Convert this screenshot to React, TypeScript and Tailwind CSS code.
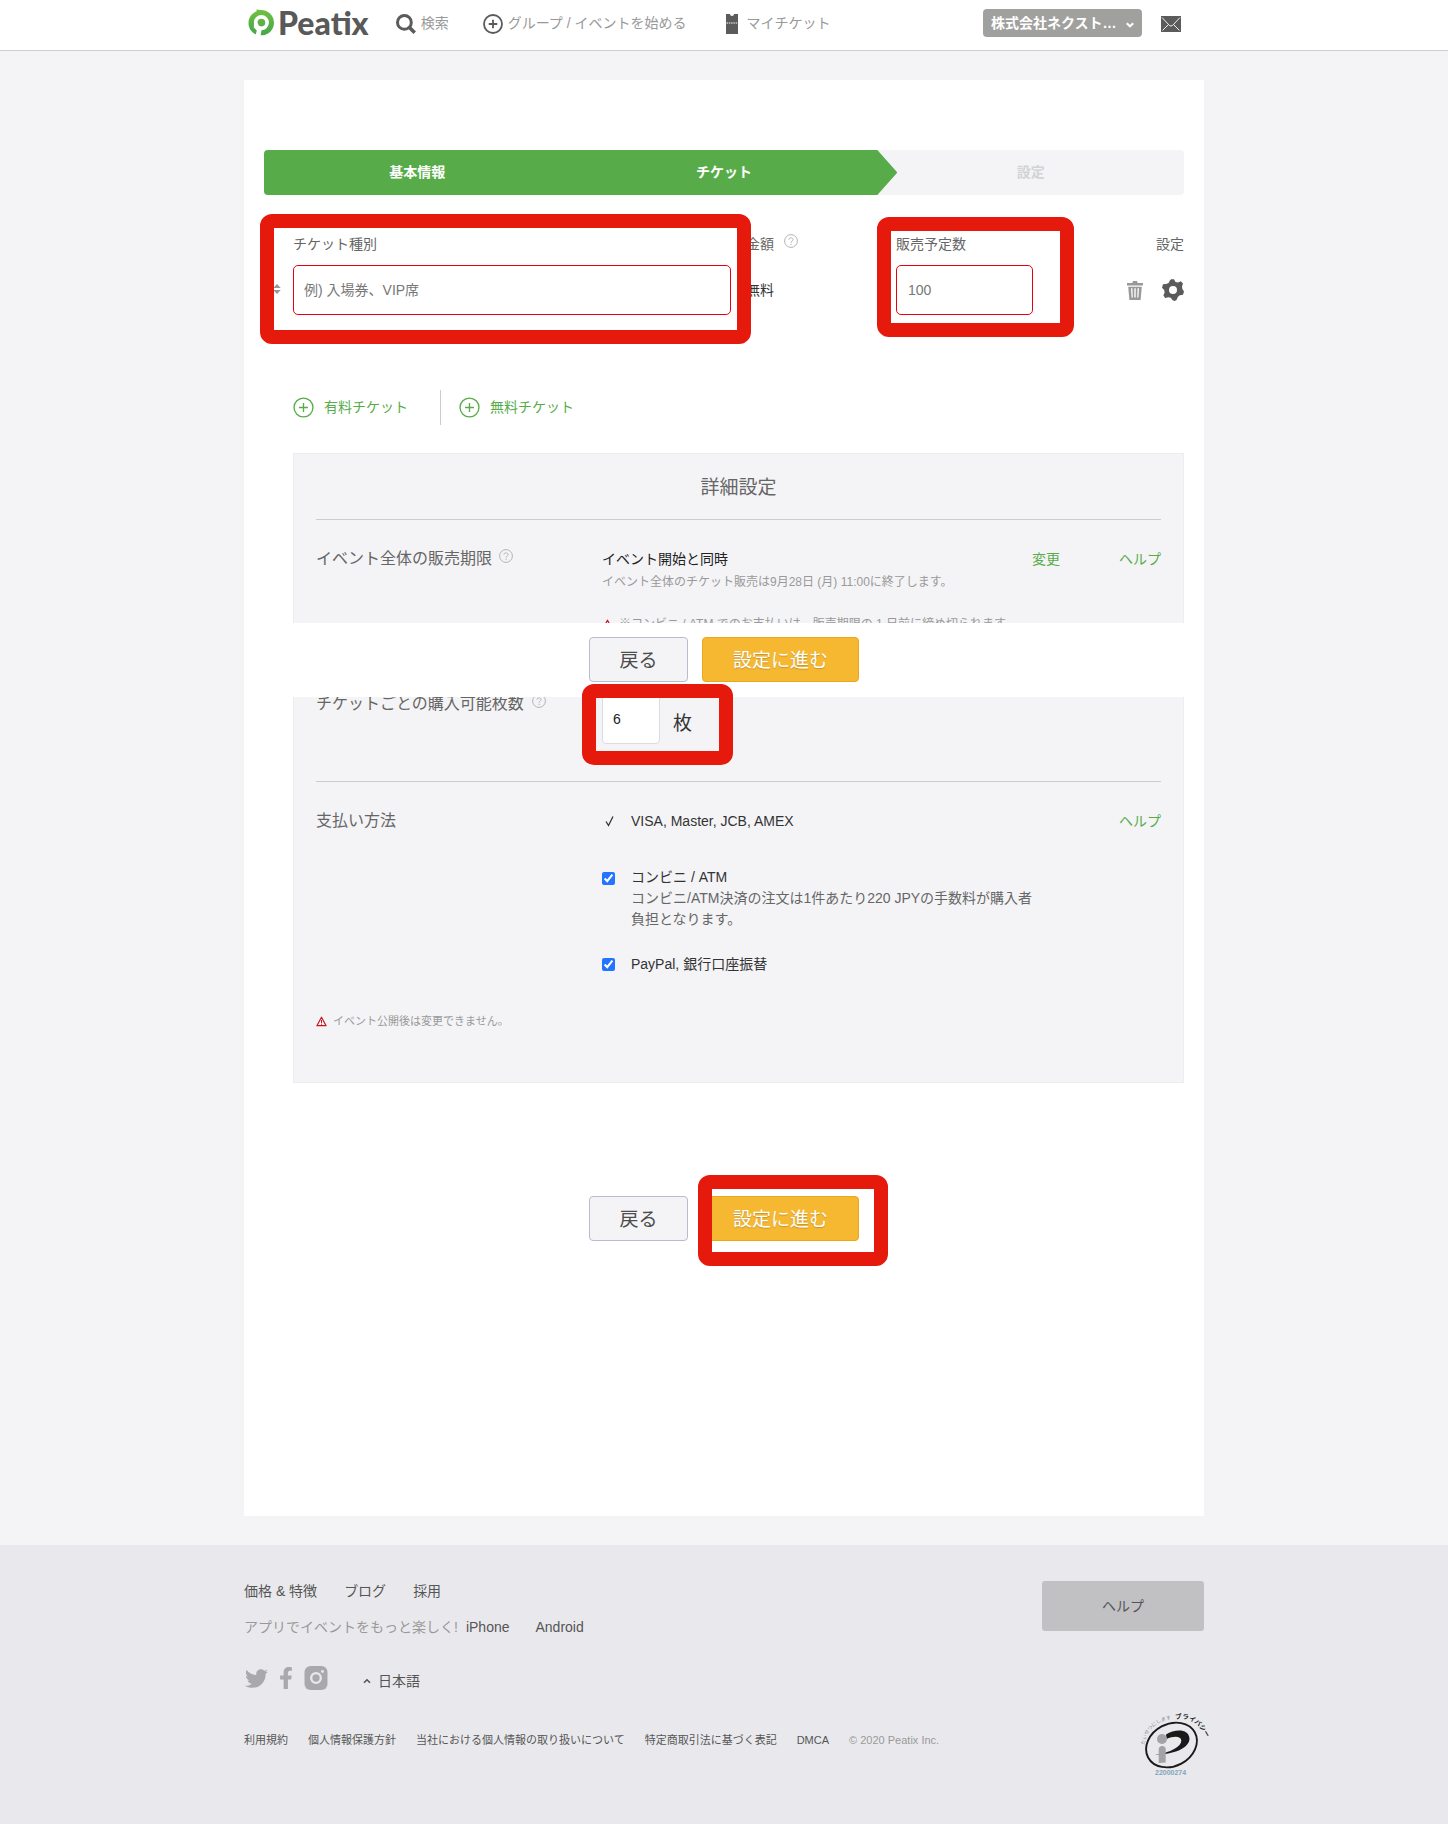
import React from "react";
import { FaTwitter, FaFacebookF } from "react-icons/fa";

const font = "font-['Liberation_Sans','Noto_Sans_CJK_JP',sans-serif]";

function PeatixMark() {
  return (
    <svg width="27" height="27" viewBox="0 0 27 27" aria-hidden="true">
      <defs>
        <linearGradient id="markFill" x1="0" y1="0" x2="0" y2="1">
          <stop offset="0" stopColor="#72c043" />
          <stop offset="1" stopColor="#45a748" />
        </linearGradient>
      </defs>
      <path
        d="M8 .4l5 .7C20.600 1.300 26 7 26 13.700 26 20.500 20.800 25.800 14.500 26.300 12 26.500 9 26 7 24.900 3 22.600.5 18.700.5 13.900.5 8.600 4 4 9 2.100z"
        fill="url(#markFill)"
      />
      <circle cx="13.400" cy="13.600" r="5.700" fill="none" stroke="#fff" strokeWidth="3.700" />
      <path d="M6 14.500h4l1.500 4.500 2 2-.9 6H7.400l1.400-5.500-3-3z" fill="#fff" />
    </svg>
  );
}

function PlusCircle({ size, color, stroke }: { size: number; color: string; stroke: number }) {
  return (
    <svg width={size} height={size} viewBox="0 0 22 22" fill="none" stroke={color} strokeWidth={stroke} aria-hidden="true">
      <circle cx="11" cy="11" r="9.900" />
      <path d="M11 6.300v9.400M6.300 11h9.400" />
    </svg>
  );
}

function HelpIcon() {
  return (
    <svg width="14" height="14" viewBox="0 0 14 14" fill="none" stroke="#b4b4b6" aria-hidden="true">
      <circle cx="7" cy="7" r="6.400" />
      <path d="M4.900 5.700C5 4.400 5.900 3.900 7 3.900s2.100.6 2.100 1.700C9.100 7 7.100 7 7.100 8.700M7.100 9.800v1.200" />
    </svg>
  );
}

function WarnIcon() {
  return (
    <svg width="11" height="11" viewBox="0 0 11 11" fill="none" stroke="#c8161d" strokeWidth="1.200" aria-hidden="true">
      <path d="M5.500 1.200L10.100 9.700H.9z" strokeLinejoin="round" />
      <path d="M5.500 4v3M5.500 7.700v1" strokeWidth="1" />
    </svg>
  );
}

function Chevron({ up = false, width = 2 }: { up?: boolean; width?: number }) {
  return (
    <svg width="8" height="6" viewBox="0 0 8 6" fill="none" stroke="currentColor" strokeWidth={width} aria-hidden="true">
      <path d={up ? "M1 4.800l3-3 3 3" : "M.8 1.200L4 4.300l3.200-3.100"} />
    </svg>
  );
}

function Highlight({ className }: { className: string }) {
  return <span aria-hidden="true" className={"pointer-events-none absolute z-10 rounded-xl border-[14px] border-[#e6190d] " + className} />;
}

function Header() {
  return (
    <header className="border-b border-[#cdced2] bg-white">
      <div className="mx-auto flex h-[50px] max-w-[960px] items-center pb-[10px] text-[14px] text-[#999]">
        <a href="#home" aria-label="Peatix" className="flex items-center gap-[3px] pl-1 pt-[4px]">
          <PeatixMark />
          <span className="font-['Lato',sans-serif] text-[32px] font-black leading-[27px] text-[#595959]">Peatix</span>
        </a>
        <nav className="flex flex-1 items-center pl-[27px] pt-[7px]">
          <a href="#search" className="flex items-center gap-[5px]">
            <svg width="20" height="20" viewBox="0 0 20 20" fill="none" stroke="#5b5b5b" aria-hidden="true">
              <circle cx="8.400" cy="8.400" r="6.900" strokeWidth="3" />
              <path d="M13 13l5.700 5.700" strokeWidth="3.600" />
            </svg>
            検索
          </a>
          <a href="#create" className="ml-[34px] flex items-center gap-[5px]">
            <PlusCircle size={20} color="#5b5b5b" stroke={2} />
            グループ / イベントを始める
          </a>
          <a href="#tickets" className="ml-[40px] flex items-center gap-2">
            <svg width="12" height="20" viewBox="0 0 12 20" aria-hidden="true">
              <path d="M0 0h4a2 2 0 0 0 4 0h4v20H0z" fill="#5b5b5b" />
              <path d="M.5 9h12" stroke="#fff" strokeDasharray="1.500 .8" />
            </svg>
            マイチケット
          </a>
        </nav>
        <button type="button" className="mt-[6px] flex h-7 w-[159px] items-center justify-between rounded bg-[#a0a09e] px-2 font-bold text-white">
          株式会社ネクスト…
          <span className="pt-[3px]"><Chevron /></span>
        </button>
        <a href="#messages" aria-label="メッセージ" className="ml-[19px] mr-[23px] mt-[8px]">
          <svg width="20" height="16" viewBox="0 0 20 16" aria-hidden="true">
            <rect width="20" height="16" fill="#5b5b5b" />
            <path d="M1 1.500l7.500 8q1.500 1 3 0l7.500-8M1.500 14.500l5.500-5.500M18.500 14.500L13 9" fill="none" stroke="#fff" strokeWidth=".9" />
          </svg>
        </a>
      </div>
    </header>
  );
}

function Steps() {
  return (
    <ol className="flex h-[45px] items-stretch overflow-hidden rounded bg-[#f4f4f6] text-[14px] font-bold text-white">
      <li className="flex flex-1 items-center justify-center bg-[#57ac49]">基本情報</li>
      <li className="relative flex flex-1 items-center justify-center bg-[#57ac49]">
        チケット
        <span className="absolute -right-5 top-0 h-full w-[22px] bg-[#57ac49] [clip-path:polygon(0_0,2px_0,100%_50%,2px_100%,0_100%)]" />
      </li>
      <li className="flex flex-1 items-center justify-center text-[#d2d3d5]">設定</li>
    </ol>
  );
}

function TicketRow() {
  return (
    <div className="mt-[37px] grid grid-cols-[minmax(0,1fr)_135px_137px_136px] gap-x-[15px] pl-[29px] text-[14px] leading-6 text-[#666]">
      <div className="relative">
        <Highlight className="-bottom-[29px] -left-[33px] -right-[20px] -top-[18px]" />
        <label htmlFor="kind" className="block">チケット種別</label>
        <span className="absolute -left-5 top-[51px]">
          <svg width="8" height="12" viewBox="0 0 8 12" fill="#999" aria-hidden="true">
            <path d="M4 1l3.800 4H.2zM4 11l3.800-4H.2z" />
          </svg>
        </span>
        <input id="kind" placeholder="例) 入場券、VIP席" className="mt-[9px] h-[50px] w-full rounded-[5px] border border-[#e60012] bg-white px-[10px] placeholder:text-[#777] placeholder:opacity-100" />
      </div>
      <div>
        <div className="flex gap-[10px]">
          金額
          <span className="pt-[2px]"><HelpIcon /></span>
        </div>
        <div className="mt-[9px] flex h-[50px] items-center text-[#333]">無料</div>
      </div>
      <div className="relative">
        <Highlight className="-bottom-[22px] -left-[19px] -right-[41px] -top-[15px]" />
        <label htmlFor="count" className="block">販売予定数</label>
        <input id="count" placeholder="100" className="mt-[9px] h-[50px] w-full rounded-[5px] border border-[#e60012] bg-white px-[11px] placeholder:text-[#777] placeholder:opacity-100" />
      </div>
      <div className="text-right">
        設定
        <div className="mt-[9px] flex h-[50px] items-center justify-end gap-[18px]">
          <button type="button" aria-label="削除">
            <svg width="18" height="20" viewBox="0 0 18 20" fill="#999" aria-hidden="true">
              <path d="M1 3h5.300l.7-2h4l.7 2H17v2.400H1z" />
              <path fillRule="evenodd" d="M2.200 6.700h13.600L14.600 20H3.400zM5 8.200l.6 9.400h1.200L6.400 8.200zM8.300 8.200v9.400h1.400V8.200zM11.600 8.200l-.4 9.400h1.200l.6-9.400z" />
            </svg>
          </button>
          <button type="button" aria-label="チケットの設定">
            <svg width="22" height="22" viewBox="0 0 22 22" aria-hidden="true">
              <path
                fill="#5b5b5b"
                fillRule="evenodd"
                d="M9.200.3L12 .3 13.500 3 16 3.600 18.800 2.200 21 4.600 20 7.600 20.400 10 22 12.500 21 15.800 17.800 16.200 16 17.800 14.500 21 12.800 22 10.600 21.300 8.800 18.700 6.500 18.300 3.200 19 1.400 16.600 2.600 13.600 2.200 11 0 8.800 1 5.300 4.200 5 6.600 4 8 1.200zM11 7a4 4 0 1 0 0 8 4 4 0 0 0 0-8z"
              />
            </svg>
          </button>
        </div>
      </div>
    </div>
  );
}

function Actions({ marked = false }: { marked?: boolean }) {
  return (
    <div className="flex justify-center gap-[14px] text-[19px]">
      <button type="button" className="h-[45px] w-[99px] rounded border border-[#b9bbcf] bg-[#f4f4f7] pt-[3px] text-[#4d4d4d]">戻る</button>
      <div className="relative">
        <button type="button" className="h-[45px] w-[157px] rounded border border-[#eaa61c] bg-[#f6b831] pt-[3px] text-white [text-shadow:0_1px_1px_rgba(0,0,0,0.2)]">設定に進む</button>
        {marked && <Highlight className="-bottom-[25px] -left-1 -right-[29px] -top-[21px]" />}
      </div>
    </div>
  );
}

const rowGrid = "grid grid-cols-[286px_minmax(0,1fr)_auto]";

function DetailTop() {
  return (
    <section className="mt-7 h-[170px] overflow-hidden border border-b-0 border-[#ededef] bg-[#f4f4f7] px-[22px]">
      <h2 className="border-b border-[#cbccd0] pb-[19px] pt-[22px] text-center text-[19px] leading-6 text-[#666]">詳細設定</h2>
      <div className={rowGrid + " mt-[27px]"}>
        <h3 className="flex gap-[7px] text-[16px] leading-6 text-[#666]">
          イベント全体の販売期限
          <span className="pt-[2px]"><HelpIcon /></span>
        </h3>
        <div className="leading-5 text-[#999]">
          <p className="text-[14px] leading-6 text-[#222]">イベント開始と同時</p>
          <p className="pt-px text-[12px]">イベント全体のチケット販売は9月28日 (月) 11:00に終了します。</p>
          <p className="mt-[22px] flex items-center gap-[6px] text-[12px]">
            <WarnIcon />
            <span>※コンビニ / ATM でのお支払いは、販売期限の 1 日前に締め切られます</span>
          </p>
        </div>
        <div className="flex gap-[59px] text-[14px] leading-6 text-[#57ac49]">
          <a href="#change">変更</a>
          <a href="#help-period">ヘルプ</a>
        </div>
      </div>
    </section>
  );
}

function DetailBottom() {
  return (
    <div className="relative">
      <Highlight className="-top-[13px] left-[289px] h-[81px] w-[151px]" />
      <section className="overflow-hidden border border-t-0 border-[#ededef] bg-[#f4f4f7] px-[22px] pb-[51px]">
        <div className={rowGrid + " -mt-[5px] border-b border-[#cbccd0] pb-[37px]"}>
          <label htmlFor="limit" className="flex gap-[8px] text-[16px] leading-6 text-[#666]">
            チケットごとの購入可能枚数
            <span className="pt-[2px]"><HelpIcon /></span>
          </label>
          <div className="flex items-center gap-[13px]">
            <input id="limit" defaultValue="6" className="h-[52px] w-[58px] rounded border border-[#dcdce0] bg-white px-[10px] pt-[2px] text-[14px] text-[#222]" />
            <span className="pt-3 text-[19px] leading-6 text-[#333]">枚</span>
          </div>
        </div>
        <div className={rowGrid + " mt-[27px]"}>
          <h3 className="text-[16px] leading-6 text-[#666]">支払い方法</h3>
          <div className="text-[14px] text-[#333]">
            <p className="flex items-center leading-6">
              <svg width="14" height="12" viewBox="0 0 14 12" className="mr-[15px]" fill="none" stroke="#333" strokeWidth="1.300" aria-hidden="true">
                <path d="M4 6.500l2.500 4L11 1.500" />
              </svg>
              VISA, Master, JCB, AMEX
            </p>
            <div className="mt-[34px] flex items-start gap-4 leading-[21px]">
              <input id="atm" type="checkbox" defaultChecked className="mt-[5px] size-[13px] accent-[#2374ff]" />
              <div>
                <label htmlFor="atm">コンビニ / ATM</label>
                <p className="max-w-[412px] text-[#666]">コンビニ/ATM決済の注文は1件あたり220 JPYの手数料が購入者負担となります。</p>
              </div>
            </div>
            <div className="mt-6 flex items-start gap-4 leading-[21px]">
              <input id="bank" type="checkbox" defaultChecked className="mt-[4px] size-[13px] accent-[#2374ff]" />
              <label htmlFor="bank">PayPal, 銀行口座振替</label>
            </div>
          </div>
          <a href="#help-payment" className="text-[14px] leading-6 text-[#57ac49]">ヘルプ</a>
        </div>
        <p className="mt-9 flex items-center gap-[6px] text-[11px] leading-5 text-[#999]">
          <WarnIcon />
          イベント公開後は変更できません。
        </p>
      </section>
    </div>
  );
}

function PrivacyMark() {
  return (
    <svg width="64" height="65" viewBox="0 0 64 65" role="img" aria-label="プライバシーマーク" className="overflow-visible">
      <defs>
        <path id="slogan" d="M5 34C5 21 17 8.500 34 8" />
        <path id="title" d="M35.500 8.500C47 5.500 58 11 66 26" />
      </defs>
      <text fontSize="5" fill="#888">
        <textPath href="#slogan">たいせつにします</textPath>
      </text>
      <text fontSize="6.500" fontWeight="700" fill="#222">
        <textPath href="#title">プライバシー</textPath>
      </text>
      <ellipse cx="31.500" cy="34" rx="26.500" ry="21" transform="rotate(-28 31.500 34)" fill="none" stroke="#1a1a1a" strokeWidth="1.900" />
      <path d="M26 23.500C35 17.500 49 17.500 49.500 27.500 49.500 37 34 43.500 14.500 44 31 41.500 41.500 35.500 41.300 29.500 41 24.500 33 25 26.500 28z" fill="#1a1a1a" />
      <circle cx="22" cy="28" r="5" fill="#a3a3a5" />
      <path d="M18.700 52V38.500a3.500 3.500 0 0 1 7 0v13z" fill="#a3a3a5" />
      <text x="15" y="64" fontSize="7" fontWeight="700" fill="#7fa6b8">22000274</text>
    </svg>
  );
}

function Footer() {
  return (
    <footer className="bg-[#e9e9ed]">
      <div className="mx-auto flex max-w-[960px] justify-between pb-12 pt-9 text-[14px] leading-6 text-[#555]">
        <div className="-mt-[2px] pb-6">
          <div className="flex gap-[27px]">
            <a href="#pricing">価格 &amp; 特徴</a>
            <a href="#blog">ブログ</a>
            <a href="#careers">採用</a>
          </div>
          <div className="mt-3 flex">
            <span className="mr-[8px] text-[#999]">アプリでイベントをもっと楽しく!</span>
            <a href="#iphone">iPhone</a>
            <a href="#android" className="ml-[26px]">Android</a>
          </div>
          <div className="mt-6 flex items-center text-[#a9a9ab]">
            <a href="#twitter" aria-label="Twitter" className="ml-px"><FaTwitter size={23} /></a>
            <a href="#facebook" aria-label="Facebook" className="ml-[7px]"><FaFacebookF size={22} /></a>
            <a href="#instagram" aria-label="Instagram" className="ml-[7px]">
              <svg width="24" height="24" viewBox="0 0 24 24" aria-hidden="true">
                <rect x=".5" width="23" height="24" rx="6" fill="#a9a9ab" />
                <circle cx="12" cy="12" r="4.800" fill="none" stroke="#e9e9ed" strokeWidth="2.300" />
                <circle cx="18.500" cy="5.500" r="1.400" fill="#e9e9ed" />
              </svg>
            </a>
            <button type="button" className="ml-[35px] mt-[6px] flex items-center gap-[7px] text-[#555]">
              <Chevron up width={1.6} />
              日本語
            </button>
          </div>
          <div className="mt-[35px] flex flex-wrap gap-5 text-[11px]">
            <a href="#terms">利用規約</a>
            <a href="#privacy">個人情報保護方針</a>
            <a href="#handling">当社における個人情報の取り扱いについて</a>
            <a href="#law">特定商取引法に基づく表記</a>
            <a href="#dmca">DMCA</a>
            <span className="text-[#999]">© 2020 Peatix Inc.</span>
          </div>
        </div>
        <div className="flex flex-col items-end justify-between">
          <a href="#help" className="flex h-[50px] w-[162px] items-center justify-center rounded-[3px] bg-[#c1c1c3]">ヘルプ</a>
          <PrivacyMark />
        </div>
      </div>
    </footer>
  );
}

export default function App() {
  return (
    <div className={"min-h-screen bg-[#f4f4f7] " + font}>
      <Header />
      <main className="mx-auto mb-[29px] mt-[29px] max-w-[960px] bg-white px-5 pb-[275px] pt-[70px]">
        <Steps />
        <TicketRow />
        <div className="mt-[75px] flex h-[35px] items-center pl-[29px] text-[14px] text-[#57ac49]">
          <button type="button" className="flex items-center gap-[10px]">
            <PlusCircle size={21} color="#57ac49" stroke={1.4} />
            有料チケット
          </button>
          <span className="ml-[32px] mr-[18px] h-full w-px bg-[#cbccd0]" />
          <button type="button" className="flex items-center gap-[10px]">
            <PlusCircle size={21} color="#57ac49" stroke={1.4} />
            無料チケット
          </button>
        </div>
        <div className="pl-[29px]">
          <DetailTop />
        </div>
        <div className="pb-[15px] pt-[14px]">
          <Actions />
        </div>
        <div className="pl-[29px]">
          <DetailBottom />
        </div>
        <div className="mt-[113px]">
          <Actions marked />
        </div>
      </main>
      <Footer />
    </div>
  );
}
